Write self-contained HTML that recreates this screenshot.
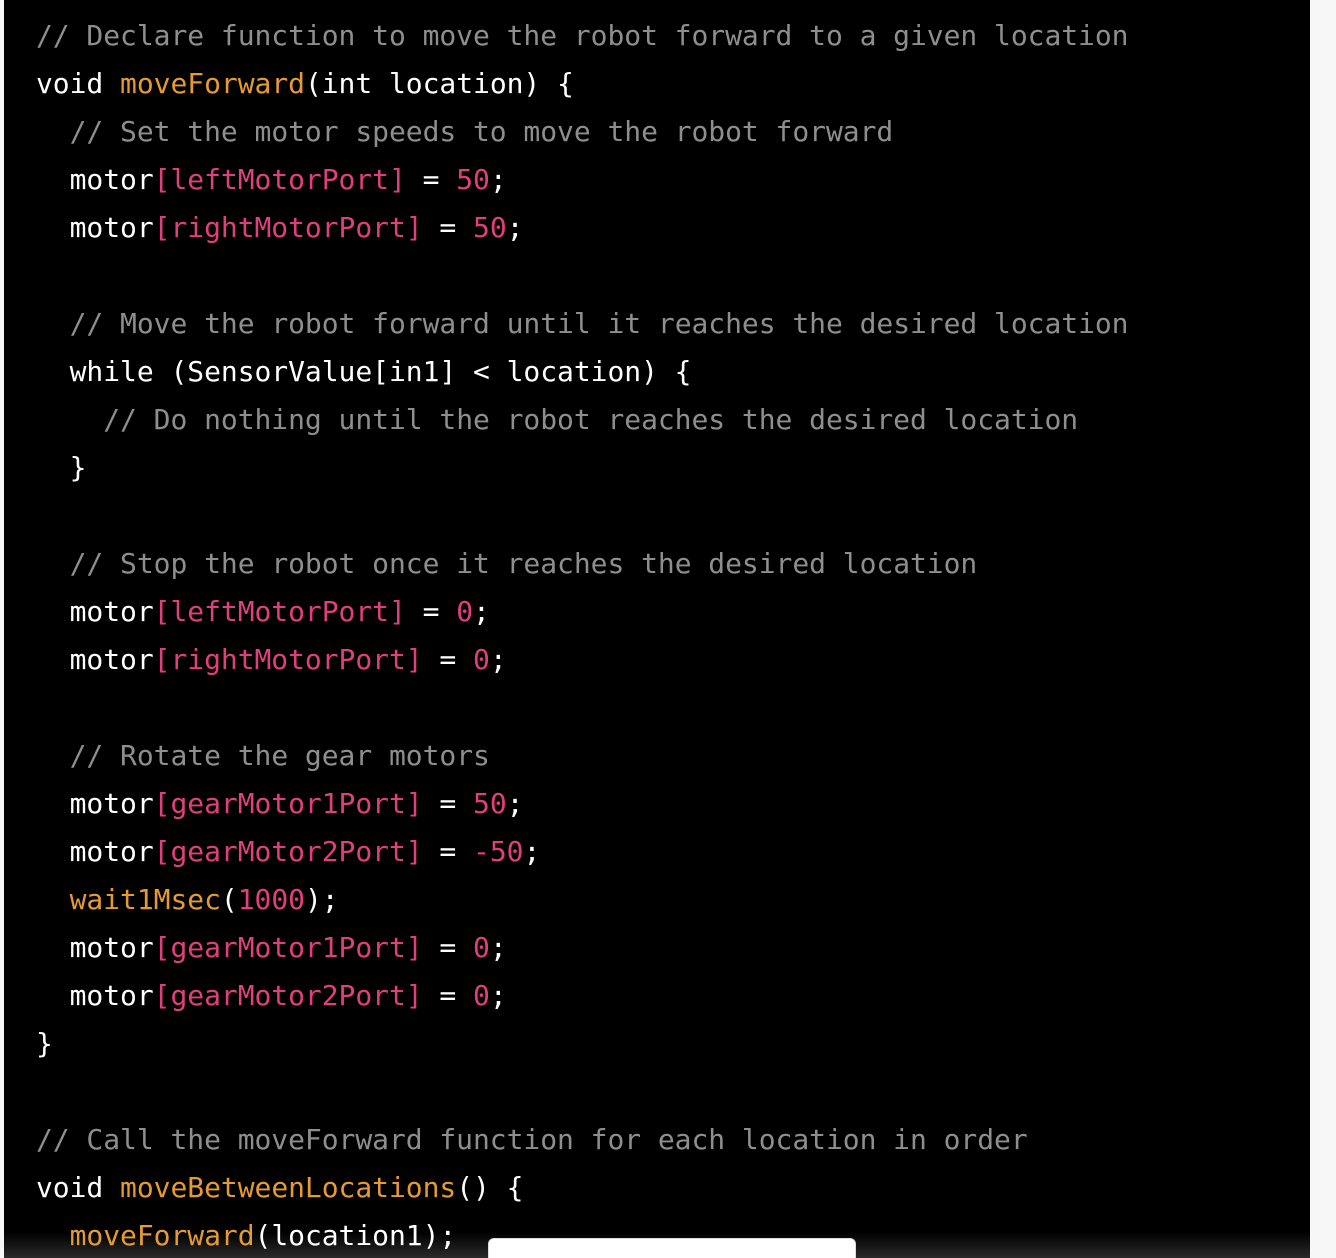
<!DOCTYPE html>
<html><head><meta charset="utf-8"><style>
html,body{margin:0;padding:0;background:#f7f7f8;width:1336px;height:1258px;overflow:hidden;position:relative;}
.panel{position:absolute;left:4px;top:0;width:1306px;height:1258px;background:#000;}
.fade{position:absolute;left:4px;top:1232px;width:1306px;height:26px;background:linear-gradient(#000,#2a2a2a);}
pre{position:absolute;left:36px;top:12px;margin:0;font-family:"DejaVu Sans Mono","Liberation Mono",monospace;font-size:28px;line-height:48px;color:#fff;letter-spacing:-0.05px;}
.c{color:#8e8e8e}.o{color:#e69a32}.p{color:#df3f7a}
.box{position:absolute;left:488px;top:1238px;width:366px;height:20px;background:#fff;border:1px solid #ddd;border-bottom:none;border-radius:6px 6px 0 0;}
</style></head><body>
<div class="panel"></div><div class="fade"></div>
<pre><span class="c">// Declare function to move the robot forward to a given location</span>
void <span class="o">moveForward</span>(int location) {
  <span class="c">// Set the motor speeds to move the robot forward</span>
  motor<span class="p">[leftMotorPort]</span> = <span class="p">50</span>;
  motor<span class="p">[rightMotorPort]</span> = <span class="p">50</span>;

  <span class="c">// Move the robot forward until it reaches the desired location</span>
  while (SensorValue[in1] &lt; location) {
    <span class="c">// Do nothing until the robot reaches the desired location</span>
  }

  <span class="c">// Stop the robot once it reaches the desired location</span>
  motor<span class="p">[leftMotorPort]</span> = <span class="p">0</span>;
  motor<span class="p">[rightMotorPort]</span> = <span class="p">0</span>;

  <span class="c">// Rotate the gear motors</span>
  motor<span class="p">[gearMotor1Port]</span> = <span class="p">50</span>;
  motor<span class="p">[gearMotor2Port]</span> = <span class="p">-50</span>;
  <span class="o">wait1Msec</span>(<span class="p">1000</span>);
  motor<span class="p">[gearMotor1Port]</span> = <span class="p">0</span>;
  motor<span class="p">[gearMotor2Port]</span> = <span class="p">0</span>;
}

<span class="c">// Call the moveForward function for each location in order</span>
void <span class="o">moveBetweenLocations</span>() {
  <span class="o">moveForward</span>(location1);
</pre>
<div class="box"></div>
</body></html>
